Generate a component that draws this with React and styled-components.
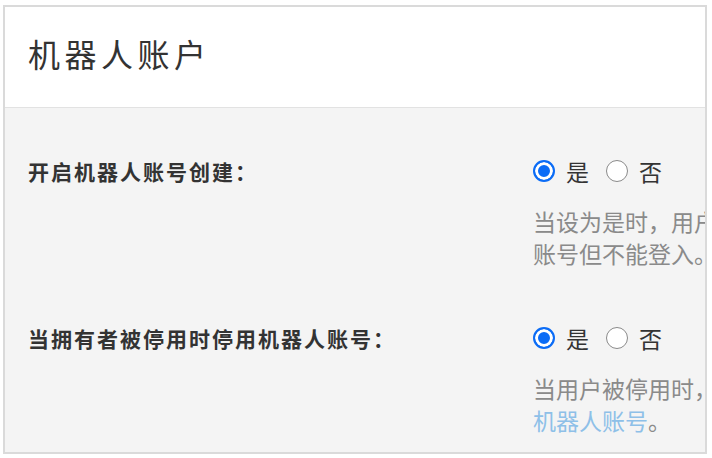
import React from "react";
import styled, { createGlobalStyle } from "styled-components";

const GlobalStyle = createGlobalStyle`
  html, body {
    margin: 0;
    padding: 0;
    background: #ffffff;
  }
  body {
    font-family: "Open Sans", "Noto Sans CJK SC", sans-serif;
  }
`;

const Page = styled.div`
  padding: 5px 0 0 3px;
  width: 712px;
  height: 458px;
  box-sizing: border-box;
  overflow: hidden;
`;

const Card = styled.div`
  width: 704px;
  height: 449px;
  box-sizing: border-box;
  border: 2px solid #dadada;
  overflow: hidden;
  background: #f4f4f4;
  display: flex;
  flex-direction: column;
`;

const Header = styled.div`
  height: 101px;
  flex-shrink: 0;
  box-sizing: border-box;
  background: #ffffff;
  border-bottom: 1px solid #e2e2e2;
  display: flex;
  align-items: center;
  padding: 0 0 8px 23px;
`;

const Title = styled.h1`
  margin: 0;
  font-family: "Noto Sans CJK SC", sans-serif;
  font-weight: 400;
  font-size: 32px;
  letter-spacing: 4.5px;
  color: #333333;
`;

const Body = styled.div`
  padding: 48px 0 0 23px;
  display: flex;
  flex-direction: column;
  gap: 54px;
`;

const Setting = styled.div`
  display: grid;
  grid-template-columns: 505px 560px;
`;

const Label = styled.div`
  font-family: "Noto Sans CJK SC", sans-serif;
  font-weight: 700;
  font-size: 21px;
  line-height: 30px;
  letter-spacing: 2px;
  color: #333333;
`;

const Control = styled.div`
  display: flex;
  flex-direction: column;
  gap: 19px;
`;

const RadioGroup = styled.div`
  display: flex;
  align-items: center;
  height: 30px;
`;

const RadioOption = styled.label`
  display: flex;
  align-items: center;
  gap: 11px;
  margin-right: 17px;
  font-family: "Noto Sans CJK SC", sans-serif;
  font-size: 23px;
  color: #333333;
`;

const RadioDot = styled.span`
  width: 22px;
  height: 22px;
  box-sizing: border-box;
  border-radius: 50%;
  background: ${(p) => (p.checked ? "#0b6cf6" : "#ffffff")};
  border: ${(p) => (p.checked ? "2px solid #0b6cf6" : "1.5px solid #8a8a8a")};
  box-shadow: ${(p) => (p.checked ? "inset 0 0 0 3px #ffffff" : "none")};
`;

const Help = styled.div`
  font-family: "Noto Sans CJK SC", sans-serif;
  font-size: 23px;
  line-height: 32px;
  color: #8a8a8a;
  white-space: nowrap;
`;

const HelpLink = styled.a`
  color: #8ec0e8;
  text-decoration: none;
`;

function Radios() {
  return (
    <RadioGroup>
      <RadioOption>
        <RadioDot checked />
        是
      </RadioOption>
      <RadioOption>
        <RadioDot />
        否
      </RadioOption>
    </RadioGroup>
  );
}

export default function App() {
  return (
    <>
      <GlobalStyle />
      <Page>
        <Card>
          <Header>
            <Title>机器人账户</Title>
          </Header>
          <Body>
            <Setting>
              <Label>开启机器人账号创建：</Label>
              <Control>
                <Radios />
                <Help>
                  当设为是时，用户可以创建机器人账号用于集成。机器人拥有
                  <br />
                  账号但不能登入。
                </Help>
              </Control>
            </Setting>
            <Setting>
              <Label>当拥有者被停用时停用机器人账号：</Label>
              <Control>
                <Radios />
                <Help>
                  当用户被停用时，停用所有由此用户管理的
                  <br />
                  <HelpLink href="#">机器人账号</HelpLink>。
                </Help>
              </Control>
            </Setting>
          </Body>
        </Card>
      </Page>
    </>
  );
}
